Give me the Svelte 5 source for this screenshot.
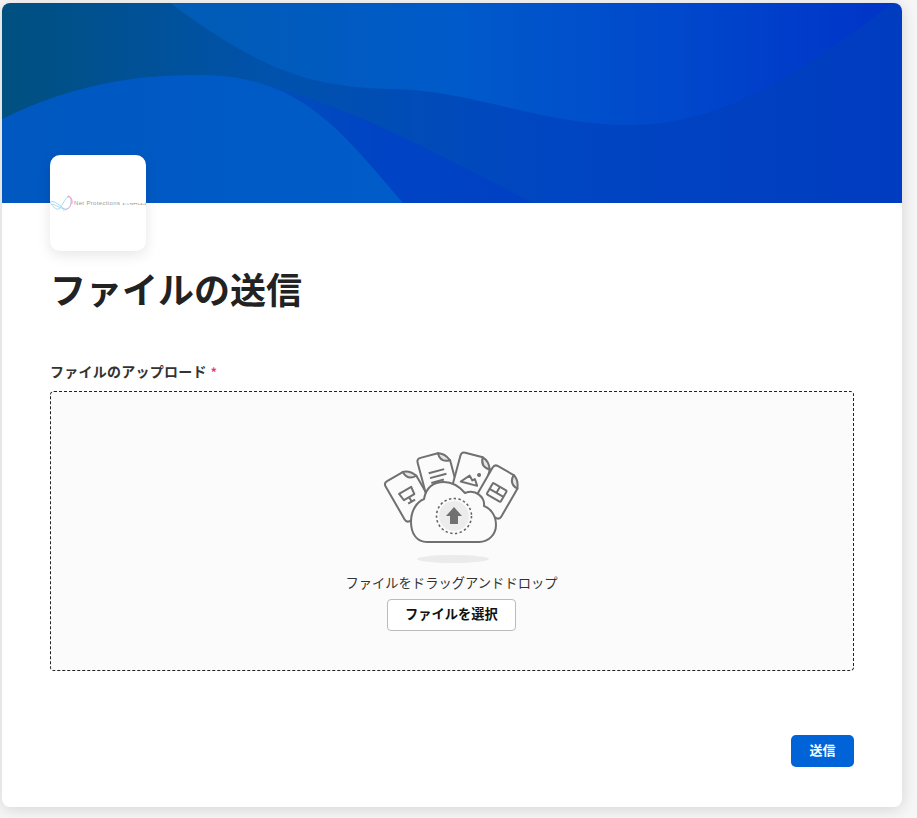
<script>
	const title = 'ファイルの送信';
	const fileSheet = 'M-12,-23 H6 L16,-13 V19 Q16,23 12,23 H-12 Q-16,23 -16,19 V-19 Q-16,-23 -12,-23 Z';
	const fold = 'M6,-23 C6,-17 9,-13 16,-13 C14,-18 10,-22 6,-23 Z';
</script>

<main class="card">
	<header class="banner">
		<svg viewBox="0 0 900 200" width="900" height="200" preserveAspectRatio="none" aria-hidden="true">
			<defs>
				<linearGradient id="base" x1="0" y1="0" x2="1" y2="0">
					<stop offset="0" stop-color="#005080" />
					<stop offset="0.3" stop-color="#0052ac" />
					<stop offset="0.6" stop-color="#0046c2" />
					<stop offset="1" stop-color="#003cc0" />
				</linearGradient>
				<linearGradient id="top" x1="0" y1="0" x2="1" y2="0">
					<stop offset="0" stop-color="#005cb4" />
					<stop offset="0.4" stop-color="#005aca" />
					<stop offset="0.7" stop-color="#0048cc" />
					<stop offset="1" stop-color="#0034c8" />
				</linearGradient>
				<linearGradient id="hill" x1="0" y1="0" x2="1" y2="0">
					<stop offset="0" stop-color="#0058c0" />
					<stop offset="1" stop-color="#005cca" />
				</linearGradient>
				<linearGradient id="back" x1="0" y1="0" x2="1" y2="0">
					<stop offset="0" stop-color="#0052b8" />
					<stop offset="0.45" stop-color="#0044c4" />
					<stop offset="1" stop-color="#0040c4" />
				</linearGradient>
			</defs>
			<rect width="900" height="200" fill="url(#base)" />
			<path d="M168,0 C250,60 300,85 390,86 C470,87 540,122 628,122 C720,122 800,70 890,0 Z" fill="url(#top)" />
			<path d="M240,76 C350,100 450,160 532,200 H400 L240,100 Z" fill="url(#back)" />
			<path d="M0,116 C70,82 130,72 197,72 C300,72 340,130 401,200 H0 Z" fill="url(#hill)" />
		</svg>
	</header>

	<div class="body">
		<div class="logo">
			<svg viewBox="0 0 96 16" width="96" height="16">
				<g fill="none" stroke-width="0.8">
					<path d="M0,7 C4,5 9,10 13,13 C16,15 20,14 21,8 C22,3 20,1 18,2 C15,3 13,10 9,14 C6,15 2,11 0,7 Z" stroke="#8fd3ee" />
					<path d="M17,2 C20,0 22,4 21,9 C20,13 17,15 13,15" stroke="#ef9cc8" />
					<path d="M2,9 C6,10 10,13 14,14" stroke="#8fd3ee" />
					<path d="M18,1 C21,1 23,5 22,9" stroke="#ef9cc8" />
				</g>
				<text class="logo-name" x="24" y="10">Net Protections</text>
				<text class="logo-sub" x="72.5" y="9.5">ネットプロテクションズ</text>
			</svg>
		</div>

		<h1>{title}</h1>

		<p class="label">ファイルのアップロード<span class="req">*</span></p>

		<div class="drop">
			<svg class="art" viewBox="0 0 170 130" width="170" height="130" aria-hidden="true">
				<ellipse cx="84" cy="119" rx="36" ry="4" fill="#ebebeb" />
				<g fill="#fbfbfb" stroke="#707070" stroke-width="2" stroke-linejoin="round">
					<g transform="translate(40 55) rotate(-30)">
						<path d={fileSheet} />
						<path d={fold} fill="#e4e4e4" />
						<path d="M-8,-6 H6 L5,2 H-7 Z M-1,2 V7 M-5,7 H3" fill="none" />
					</g>
					<g transform="translate(69 37) rotate(-15)">
						<path d={fileSheet} />
						<path d={fold} fill="#e4e4e4" />
						<path d="M-8,-6 H8 M-8,-1 H9 M-8,4 H5" fill="none" />
					</g>
					<g transform="translate(102 38) rotate(15)">
						<path d={fileSheet} />
						<path d={fold} fill="#e4e4e4" />
						<path d="M-9,6 L-2,-2 L2,2 L4,0 L8,6 Z" fill="none" />
						<circle cx="7" cy="-5" r="2" fill="#707070" stroke="none" />
					</g>
					<g transform="translate(128 52) rotate(30)">
						<path d={fileSheet} />
						<path d={fold} fill="#e4e4e4" />
						<rect x="-8" y="-6" width="16" height="13" rx="1" fill="none" />
						<path d="M-8,1 H8 M0,-6 V1" fill="none" />
					</g>
					<path d="M58,102 H110 C120,102 127,94 127,85 C127,75 121,68 115,66 C116,57 107,49 96,53 C90,46 84,42 75,42 C64,42 57,48 55,59 C48,62 42,70 42,82 C42,94 48,102 58,102 Z" />
				</g>
				<circle cx="85" cy="76" r="15" fill="#ececec" />
				<circle cx="85" cy="76" r="17.5" fill="none" stroke="#666" stroke-width="1.6" stroke-dasharray="2.4 2.4" />
				<path d="M85,67 L93,76 H89 V84 H81 V76 H77 Z" fill="#707070" />
			</svg>
			<p class="hint">ファイルをドラッグアンドドロップ</p>
			<button class="pick" type="button">ファイルを選択</button>
		</div>

		<div class="actions">
			<button class="send" type="submit">送信</button>
		</div>
	</div>
</main>

<style>
	:global(html), :global(body) {
		margin: 0;
		background: #f6f6f6;
	}

	.card {
		width: 900px;
		margin: 3px 0 11px 2px;
		background: #fff;
		border-radius: 8px;
		overflow: hidden;
		box-shadow: 0 2px 16px rgba(0, 0, 0, 0.14);
		font-family: "Noto Sans CJK JP", "Liberation Sans", sans-serif;
		color: #222;
	}

	.banner {
		height: 200px;
	}

	.banner svg {
		display: block;
	}

	.body {
		padding: 0 48px 40px;
	}

	.logo {
		position: relative;
		box-sizing: border-box;
		width: 96px;
		height: 96px;
		margin-top: -48px;
		padding-top: 40px;
		background: #fff;
		border-radius: 10px;
		box-shadow: 0 4px 14px rgba(0, 0, 0, 0.1);
	}

	.logo svg {
		display: block;
	}

	.logo-name {
		font-size: 6px;
		fill: #9a9a9a;
		font-family: "Liberation Sans", sans-serif;
		letter-spacing: 0.35px;
	}

	.logo-sub {
		font-size: 2.2px;
		fill: #444;
	}

	h1 {
		margin: 13px 0 0;
		font-size: 36px;
		line-height: 48px;
		font-weight: 700;
	}

	.label {
		margin: 49px 0 0;
		font-size: 14px;
		line-height: 20px;
		font-weight: 700;
		color: #333;
		letter-spacing: 0.25px;
	}

	.req {
		margin-left: 4px;
		color: #e8386d;
		font-size: 12px;
	}

	.drop {
		box-sizing: border-box;
		width: 804px;
		height: 280px;
		margin-top: 9px;
		display: flex;
		flex-direction: column;
		align-items: center;
		padding-top: 48px;
		background: #fbfbfb;
		border: 1px dashed #222;
		border-radius: 4px;
	}

	.art {
		display: block;
		margin-left: 3px;
	}

	.hint {
		margin: 3px 1px 0 0;
		font-size: 13.3px;
		line-height: 20px;
		color: #333;
	}

	.pick {
		width: 129px;
		height: 32px;
		margin: 6px 1px 0 0;
		padding: 0 0 4px;
		background: #fff;
		border: 1px solid #bbb;
		border-radius: 4px;
		font: inherit;
		font-size: 13.25px;
		font-weight: 700;
		color: #111;
	}

	.actions {
		display: flex;
		justify-content: flex-end;
		margin-top: 64px;
	}

	.send {
		width: 63px;
		height: 32px;
		padding: 0 0 3px;
		background: #0064d8;
		border: none;
		border-radius: 5px;
		font: inherit;
		font-size: 13px;
		font-weight: 700;
		color: #fff;
	}
</style>
